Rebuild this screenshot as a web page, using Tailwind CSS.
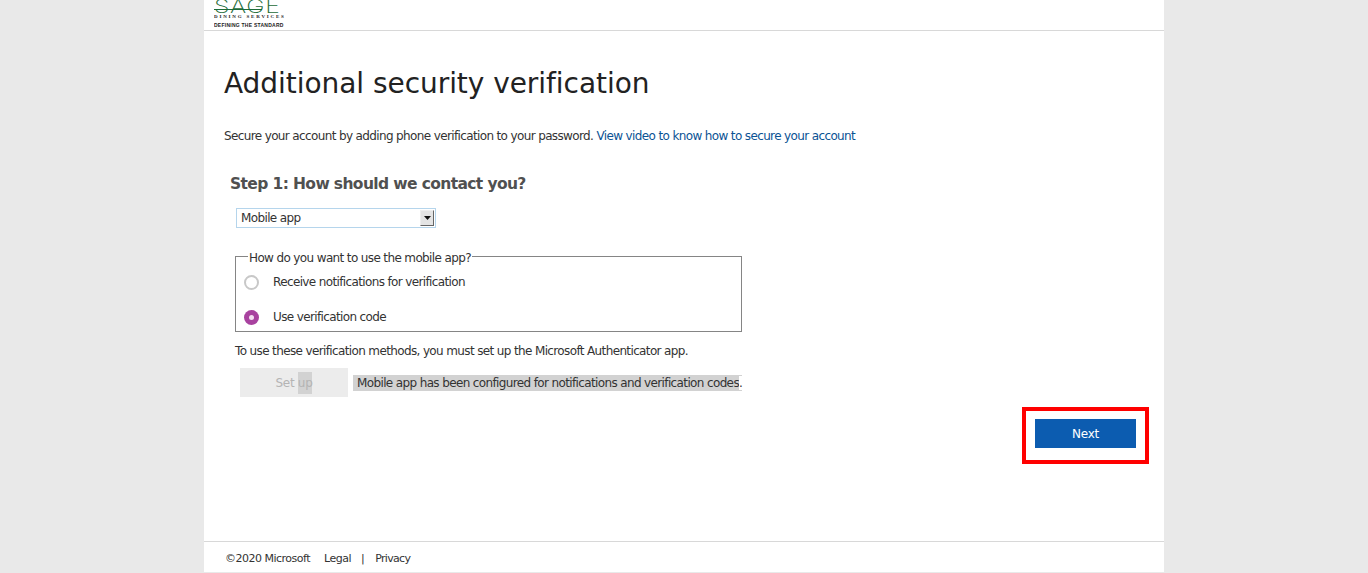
<!DOCTYPE html>
<html lang="en">
<head>
    <meta charset="UTF-8">
    <meta name="viewport" content="width=device-width, initial-scale=1.0">
    <title>Additional security verification</title>
    <script src="https://cdn.jsdelivr.net/npm/@tailwindcss/browser@4"></script>
</head>
<body class="bg-[#e9e9e9] h-[573px] overflow-hidden font-['DejaVu_Sans',sans-serif] text-[#333]">
    <div class="w-[960px] h-[572px] ml-[204px] bg-white flex flex-col">
        <!-- Logo header -->
        <header class="h-[31px] border-b border-[#d8d8d8] pl-[10px] overflow-hidden shrink-0">
            <div class="relative w-[72px] h-[30px] overflow-hidden">
                <div class="h-[17px]">
                    <div class="font-['Inter',sans-serif] font-extralight text-[19px] leading-[19px] tracking-[0.5px] text-[#1c6b38] -mt-[3px] origin-left scale-x-[1.3]">SAGE</div>
                </div>
                <div class="absolute left-0 top-[9px] w-[48px] h-px bg-[#1c6b38]"></div>
                <div class="font-['Liberation_Serif',serif] font-bold text-[5px] leading-[6px] tracking-[1.8px] text-[#222] whitespace-nowrap">DINING SERVICES</div>
                <div class="font-['Liberation_Sans',sans-serif] font-bold text-[5px] leading-[6px] tracking-[0.25px] text-[#222] whitespace-nowrap mt-[2px]">DEFINING THE STANDARD</div>
            </div>
        </header>

        <main class="flex-1 pl-[20px] pr-[28px] flex flex-col">
            <h1 class="text-[28px] leading-[34px] mt-[36px] text-[#222] tracking-[-0.05px] whitespace-nowrap">Additional security verification</h1>
            <p class="text-[12px] leading-[16px] mt-[27px] tracking-[-0.63px] whitespace-nowrap">Secure your account by adding phone verification to your password. <a class="text-[#0b5394]">View video to know how to secure your account</a></p>

            <h2 class="text-[15.5px] leading-[20px] font-bold mt-[30px] ml-[6px] text-[#505050] tracking-[-0.62px] whitespace-nowrap">Step 1: How should we contact you?</h2>

            <div class="mt-[14px] ml-[12px] w-[200px] h-[20px] border border-[#b5d5ec] flex items-center justify-between pl-[4px] pr-px">
                <span class="text-[12px] tracking-[-0.63px]">Mobile app</span>
                <span class="w-[14px] h-[16px] bg-[#e4e4e4] border border-t-[#eee] border-l-[#eee] border-r-[#666] border-b-[#666] flex items-center justify-center">
                    <svg width="7" height="4" viewBox="0 0 7 4"><path d="M0 0h7L3.5 4z" fill="#111"/></svg>
                </span>
            </div>

            <fieldset class="mt-[21px] ml-[11px] w-[507px] h-[83px] border border-[#858585] pl-[8px]">
                <legend class="relative top-[2px] text-[12px] leading-[14px] tracking-[-0.63px] ml-[4px] px-px -mb-[1px] whitespace-nowrap">How do you want to use the mobile app?</legend>
                <div class="flex items-center gap-[14px] h-[16px] mt-[12px] text-[12px] tracking-[-0.63px]">
                    <span class="w-[15px] h-[15px] rounded-full border-2 border-[#c8c8c8] bg-white"></span>
                    <span>Receive notifications for verification</span>
                </div>
                <div class="flex items-center gap-[14px] h-[16px] mt-[19px] text-[12px] tracking-[-0.63px]">
                    <span class="w-[15px] h-[15px] rounded-full bg-[#a8429f] flex items-center justify-center"><span class="w-[5px] h-[5px] rounded-full bg-[#f3dff0]"></span></span>
                    <span>Use verification code</span>
                </div>
            </fieldset>

            <p class="text-[12px] leading-[16px] mt-[11px] ml-[11px] tracking-[-0.63px] whitespace-nowrap">To use these verification methods, you must set up the Microsoft Authenticator app.</p>

            <div class="flex items-start mt-[9px] ml-[16px] h-[29px]">
                <div class="w-[108px] h-[29px] pt-px bg-[#ececec] text-[#b4b4b4] text-[12px] flex items-center justify-center tracking-[-0.3px]">Set&nbsp;<span class="bg-[#d2d2d2] leading-[22px]">up</span></div>
                <div class="ml-[5px] mt-[7px] h-[16px] bg-[#d2d2d2] text-[12px] leading-[16px] pl-[4px] tracking-[-0.63px] whitespace-nowrap">Mobile app has been configured for notifications and verification codes<span class="bg-white">.</span></div>
            </div>

            <div class="flex justify-end mt-[10px] -mr-[13px]">
                <div class="w-[127px] h-[57px] border-[4px] border-[#f00] flex items-start justify-center pt-[8px]">
                    <button class="w-[101px] h-[29px] pt-px bg-[#0c5cb0] text-white text-[12px] font-medium tracking-[-0.2px]">Next</button>
                </div>
            </div>
        </main>

        <footer class="h-[31px] border-t border-[#d8d8d8] pl-[21px] pt-[5px] flex items-center text-[11px] tracking-[-0.5px] text-[#333] shrink-0 whitespace-nowrap">
            <span>©2020 Microsoft</span>
            <span class="ml-[14px]">Legal</span>
            <span class="ml-[10px]">|</span>
            <span class="ml-[11px] tracking-[-0.7px]">Privacy</span>
        </footer>
    </div>
</body>
</html>
